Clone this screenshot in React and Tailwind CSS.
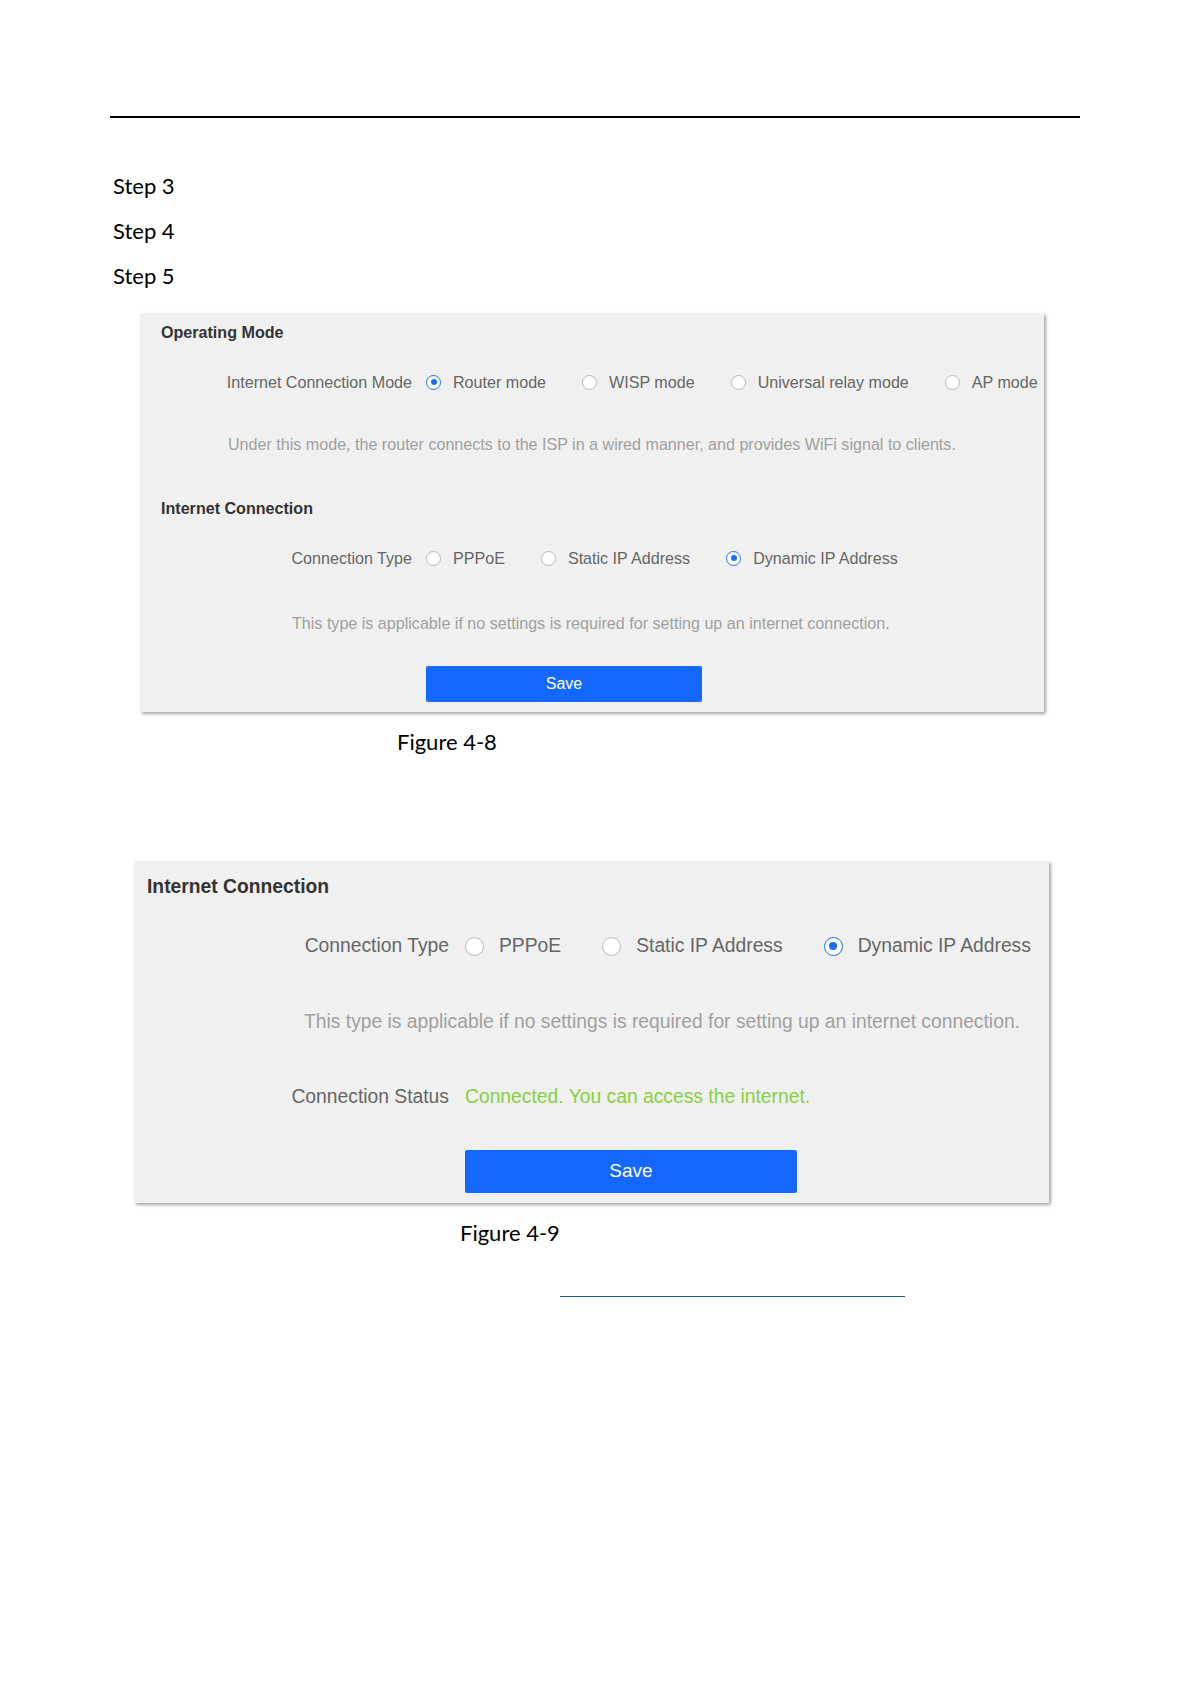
import React from 'react';

const ui = { fontFamily: '"Liberation Sans", Arial, sans-serif' };
const doc = { fontFamily: 'Lato, "Open Sans", sans-serif' };

// small radio drawn with css circles
const Radio = ({ checked, big }) => {
    const size = big ? 'w-[19px] h-[19px]' : 'w-[15px] h-[15px]';
    const dot = big ? 'w-[8px] h-[8px]' : 'w-[6px] h-[6px]';
    return (
        <span
            className={`${size} shrink-0 rounded-full bg-white flex items-center justify-center ${
                checked ? 'border-[1.5px] border-[#1a6dff]' : 'border border-[#b8b8b8]'
            }`}
        >
            {checked && <span className={`${dot} rounded-full bg-[#1a6dff]`} />}
        </span>
    );
};

const Option = ({ label, checked, big }) => (
    <div className={`flex items-center ${big ? 'gap-[15px]' : 'gap-[12px]'}`}>
        <Radio checked={checked} big={big} />
        <span className="text-[#666] whitespace-nowrap">{label}</span>
    </div>
);

const SaveButton = ({ big }) => (
    <button
        className={`rounded-[2px] bg-[#1467ff] text-white flex items-center justify-center ${
            big ? 'w-[332px] h-[43px] text-[19px] ml-[331px]' : 'w-[276px] h-[36px] text-[16px] ml-[286px]'
        }`}
    >
        Save
    </button>
);

const App = () => {
    const modes = ['Router mode', 'WISP mode', 'Universal relay mode', 'AP mode'];
    const types = ['PPPoE', 'Static IP Address', 'Dynamic IP Address'];

    return (
        <div className="w-[1191px] min-h-[1684px] bg-white pt-[116px] flex flex-col items-start">
            {/* header rule */}
            <div className="ml-[110px] w-[970px] h-[2px] bg-black" />

            {/* steps */}
            <div className="mt-[45px] ml-[113px] text-[22px] leading-[45px] text-black" style={doc}>
                <p>Step 3</p>
                <p>Step 4</p>
                <p>Step 5</p>
            </div>

            {/* Figure 4-8 */}
            <div
                className="mt-[15px] ml-[140px] w-[904px] bg-[#f0f0f0] shadow-[2px_2px_3px_rgba(0,0,0,0.35)] pt-[7px] pb-[10px] text-[16.1px]"
                style={ui}
            >
                <div className="h-[24px] flex items-center pl-[21px] font-bold text-[#333]">Operating Mode</div>

                <div className="mt-[26px] h-[24px] flex items-center">
                    <span className="w-[272px] text-right text-[#666] whitespace-nowrap">Internet Connection Mode</span>
                    <div className="ml-[14px] flex items-center gap-[36px]">
                        {modes.map((m, i) => (
                            <Option key={m} label={m} checked={i === 0} />
                        ))}
                    </div>
                </div>

                <div className="mt-[38px] h-[24px] flex items-center pl-[88px] text-[#a0a0a0] whitespace-nowrap">
                    Under this mode, the router connects to the ISP in a wired manner, and provides WiFi signal to clients.
                </div>

                <div className="mt-[40px] h-[24px] flex items-center pl-[21px] font-bold text-[#333]">
                    Internet Connection
                </div>

                <div className="mt-[26px] h-[24px] flex items-center">
                    <span className="w-[272px] text-right text-[#666]">Connection Type</span>
                    <div className="ml-[14px] flex items-center gap-[36px]">
                        {types.map((t, i) => (
                            <Option key={t} label={t} checked={i === 2} />
                        ))}
                    </div>
                </div>

                <div className="mt-[41px] h-[24px] flex items-center pl-[152px] text-[#a0a0a0] whitespace-nowrap">
                    This type is applicable if no settings is required for setting up an internet connection.
                </div>

                <div className="mt-[31px]">
                    <SaveButton />
                </div>
            </div>

            <p className="mt-[15px] ml-[397px] text-[22px] leading-[30px] text-black" style={doc}>
                Figure 4-8
            </p>

            {/* Figure 4-9 */}
            <div
                className="mt-[104px] ml-[134px] w-[915px] bg-[#f0f0f0] shadow-[2px_2px_3px_rgba(0,0,0,0.35)] pt-[12px] pb-[10px] text-[19.3px]"
                style={ui}
            >
                <div className="h-[28px] flex items-center pl-[13px] font-bold text-[#333]">Internet Connection</div>

                <div className="mt-[31px] h-[28px] flex items-center">
                    <span className="w-[315px] text-right text-[#666]">Connection Type</span>
                    <div className="ml-[16px] flex items-center gap-[41px]">
                        {types.map((t, i) => (
                            <Option key={t} label={t} checked={i === 2} big />
                        ))}
                    </div>
                </div>

                <div className="mt-[48px] h-[28px] flex items-center pl-[170px] text-[#a0a0a0] whitespace-nowrap">
                    This type is applicable if no settings is required for setting up an internet connection.
                </div>

                <div className="mt-[47px] h-[28px] flex items-center">
                    <span className="w-[315px] text-right text-[#666]">Connection Status</span>
                    <span className="ml-[16px] text-[#86d13f]">Connected. You can access the internet.</span>
                </div>

                <div className="mt-[39px]">
                    <SaveButton big />
                </div>
            </div>

            <p className="mt-[15px] ml-[460px] text-[22px] leading-[30px] text-black" style={doc}>
                Figure 4-9
            </p>

            <div className="mt-[48px] ml-[560px] w-[345px] h-px bg-[#1f5a9e]" />
        </div>
    );
};

export default App;
